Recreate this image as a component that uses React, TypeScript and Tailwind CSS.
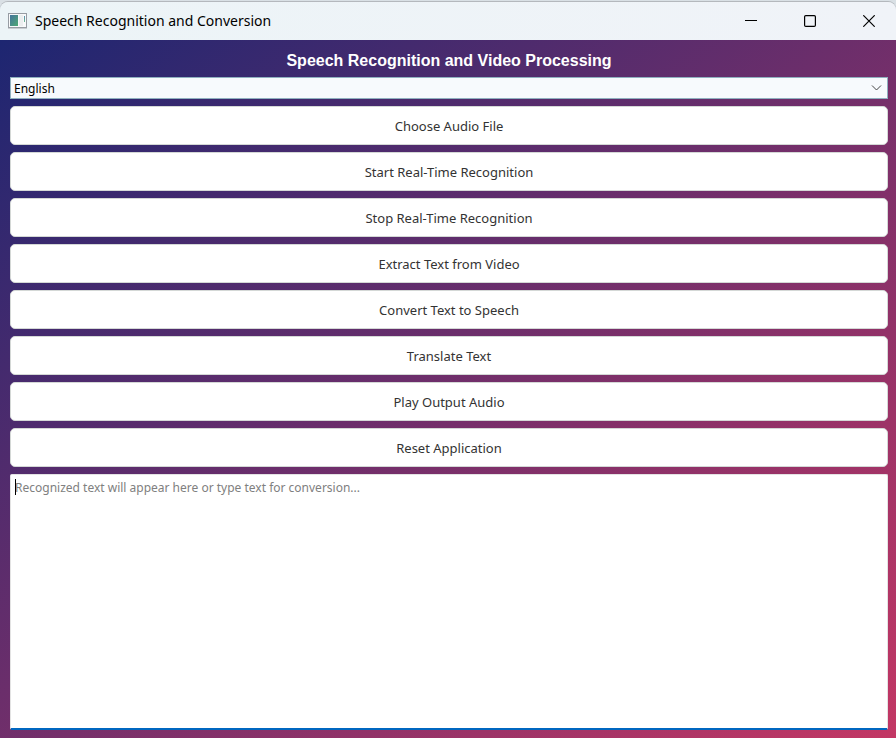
import React from "react";

const actions = [
  "Choose Audio File",
  "Start Real-Time Recognition",
  "Stop Real-Time Recognition",
  "Extract Text from Video",
  "Convert Text to Speech",
  "Translate Text",
  "Play Output Audio",
  "Reset Application",
];

function AppIcon() {
  return (
    <svg className="h-4 w-5 shrink-0" viewBox="0 0 20 16" aria-hidden="true">
      <defs>
        <linearGradient id="pane" x1="0" y1="0" x2="1" y2="1">
          <stop offset="0" stopColor="#44749c" />
          <stop offset="1" stopColor="#4fa873" />
        </linearGradient>
        <linearGradient id="strip" x1="0" y1="0" x2="0" y2="1">
          <stop offset="0" stopColor="#5b8fb0" />
          <stop offset="1" stopColor="#6db790" />
        </linearGradient>
      </defs>
      <rect x="0.5" y="0.5" width="18" height="14" fill="#f8f9fa" stroke="#979ca3" />
      <rect x="2" y="2" width="8" height="11" fill="url(#pane)" />
      <rect x="11" y="2" width="4" height="11" fill="#eceeef" />
      <rect x="16" y="3" width="1" height="6" fill="url(#strip)" />
      <rect x="0" y="15" width="19" height="1" fill="#c9cdd1" />
    </svg>
  );
}

function TitleBar() {
  return (
    <header className="flex h-[38px] items-center rounded-t-lg bg-linear-to-r from-[#ecf4f7] to-[#f0f3f8] pl-2 shadow-[0_-1px_0_#b4b8bd]">
      <AppIcon />
      <span className="ml-[7px] flex-1 font-['Noto_Sans',sans-serif] text-sm leading-5 text-black">
        Speech Recognition and Conversion
      </span>
      <div className="flex h-full gap-[5px]">
        <button type="button" aria-label="Minimize" className="flex h-full w-[54px] items-center justify-center">
          <svg className="size-3" viewBox="0 0 12 12" shapeRendering="crispEdges">
            <rect x="0" y="5" width="12" height="1" />
          </svg>
        </button>
        <button type="button" aria-label="Maximize" className="flex h-full w-[54px] items-center justify-center">
          <svg className="size-3" viewBox="0 0 12 12" fill="none" stroke="#000">
            <rect x="0.6" y="0.6" width="10.8" height="10.8" rx="1.2" strokeWidth="1.2" />
          </svg>
        </button>
        <button type="button" aria-label="Close" className="flex h-full w-[54px] items-center justify-center">
          <svg className="size-3" viewBox="0 0 12 12" fill="none" stroke="#000" strokeWidth="1.2">
            <path d="M0.3 0.3L11.7 11.7M11.7 0.3L0.3 11.7" />
          </svg>
        </button>
      </div>
    </header>
  );
}

export default function App() {
  return (
    <div className="flex min-h-screen flex-col bg-[#d9e0e5] pt-[2px]">
      <TitleBar />
      <main className="flex flex-1 flex-col gap-[7px] bg-linear-to-br/srgb from-[#1d2671] to-[#c33764] pt-[10px] pr-2 pb-2 pl-[10px]">
        <h1 className="pt-px text-center font-['Liberation_Sans',Arial,sans-serif] text-base leading-[19px] font-bold text-white">
          Speech Recognition and Video Processing
        </h1>
        <div className="relative">
          <select
            aria-label="Language"
            className="block h-[22px] w-full appearance-none border border-[#8fb0bf] bg-[#f7fafd] px-[3px] pt-px font-['Noto_Sans',sans-serif] text-xs text-black"
          >
            <option>English</option>
          </select>
          <svg
            className="pointer-events-none absolute top-2 right-[6px] h-[6px] w-[11px]"
            viewBox="0 0 11 6"
            fill="none"
            stroke="#444"
          >
            <path d="M1 0.5L5.5 5L10 0.5" />
          </svg>
        </div>
        {actions.map((label) => (
          <button
            key={label}
            type="button"
            className="h-[39px] w-full rounded-[5px] border border-[#d4d8d6] bg-white font-['Noto_Sans',sans-serif] text-[13px] leading-5 text-[#333]"
          >
            {label}
          </button>
        ))}
        <div className="relative flex flex-1">
          <textarea
            aria-label="Recognized text"
            placeholder="Recognized text will appear here or type text for conversion..."
            className="min-h-[256px] w-full resize-none rounded-[2px] border border-b-2 border-[#e3e3e3] border-b-[#0067c0] bg-white px-1 py-1 font-['Noto_Sans',sans-serif] text-xs leading-[18px] text-black outline-none placeholder:text-[#808080]"
          />
          <span className="pointer-events-none absolute top-[5px] left-[5px] h-4 w-px bg-black" />
        </div>
      </main>
    </div>
  );
}
